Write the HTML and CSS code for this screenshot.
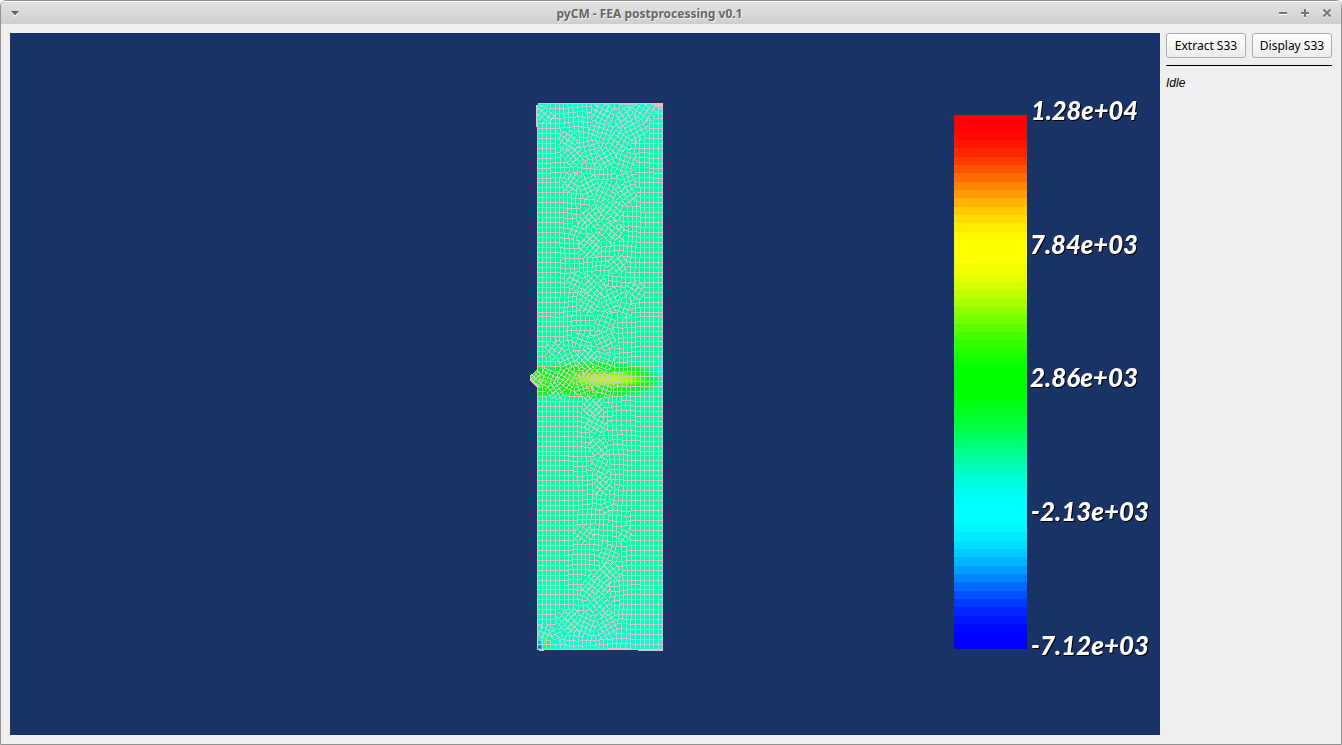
FILE: index.html
```html
<!DOCTYPE html>
<html lang="en">
<head>
<meta charset="utf-8">
<title>pyCM - FEA postprocessing v0.1</title>
<link rel="stylesheet" href="styles.css">
</head>
<body>
<div class="window">
  <header class="titlebar">
    <svg class="menu-arrow" width="10" height="7" viewBox="0 0 10 7"><path d="M1 2h8L5 7z" fill="#fff"/><path d="M1 1h8L5 5.5z" fill="#626262"/></svg>
    <h1 class="title">pyCM - FEA postprocessing v0.1</h1>
    <div class="controls">
      <svg width="10" height="10" viewBox="0 0 10 10"><path d="M1 6.5h8" stroke="#fff" stroke-width="1"/><path d="M1 5h8" stroke="#757575" stroke-width="2"/></svg>
      <svg width="10" height="10" viewBox="0 0 10 10"><path d="M1 6h8M5 2v8" stroke="#f4f4f4" stroke-width="2"/><path d="M1 5h8M5 1v8" stroke="#757575" stroke-width="2"/></svg>
      <svg width="10" height="10" viewBox="0 0 10 10"><path d="M1.5 2.5l7 7M8.500 2.500l-7 7" stroke="#f4f4f4" stroke-width="2"/><path d="M1.500 1.500l7 7M8.500 1.500l-7 7" stroke="#757575" stroke-width="2"/></svg>
    </div>
  </header>
  <main class="content">
    <svg class="viewport" viewBox="10 33 1150 702">
      <defs>
        <linearGradient id="stress" gradientUnits="userSpaceOnUse" x1="0" y1="103" x2="0" y2="650">
          <stop offset="0" stop-color="#00ffd0"/>
          <stop offset=".07" stop-color="#00ffb9"/>
          <stop offset=".2" stop-color="#00ffa5"/>
          <stop offset=".8" stop-color="#00ffa2"/>
          <stop offset=".94" stop-color="#00ffb9"/>
          <stop offset="1" stop-color="#00ffdc"/>
        </linearGradient>
        <radialGradient id="weld">
          <stop offset="0" stop-color="#2cff00"/>
          <stop offset=".65" stop-color="#06fa08"/>
          <stop offset=".82" stop-color="#00ff35" stop-opacity=".85"/>
          <stop offset="1" stop-color="#00ffa0" stop-opacity="0"/>
        </radialGradient>
        <radialGradient id="core">
          <stop offset="0" stop-color="#d4ff00"/>
          <stop offset=".5" stop-color="#9cff00" stop-opacity=".85"/>
          <stop offset="1" stop-color="#30ff00" stop-opacity="0"/>
        </radialGradient>
        <radialGradient id="cool">
          <stop offset="0" stop-color="#00ffe6"/>
          <stop offset="1" stop-color="#00ffb0" stop-opacity="0"/>
        </radialGradient>
        <clipPath id="part"><path id="outline" d="M539 103.500H662.500V650.500H638.500V649.500H543.500V650.500H539.500V649.500H537.500V387L530.500 380V376L537.500 370V126.500H536.500V105.500H538.500Z"/></clipPath>
      </defs>
      <g clip-path="url(#part)">
        <rect x="528" y="102" width="136" height="550" fill="url(#stress)"/>
        <ellipse cx="662" cy="372" rx="16" ry="32" fill="url(#cool)"/>
        <ellipse cx="545" cy="145" rx="12" ry="14" fill="url(#cool)" opacity=".6"/>
        <ellipse cx="594" cy="380" rx="73" ry="21" fill="url(#weld)"/>
        <ellipse cx="540" cy="381" rx="22" ry="18" fill="url(#weld)"/>
        <ellipse cx="625" cy="379" rx="34" ry="16" fill="url(#weld)"/>
        <ellipse cx="607" cy="379" rx="48" ry="10" fill="url(#core)"/>
        <ellipse cx="547" cy="643" rx="4" ry="7" fill="#19ff52" opacity=".8"/>
        <path d="M537 641h4v4h2v5h-6z" fill="#0aaeff"/>
        <path d="M538 646h3v2h-3z" fill="#0068ff"/>
        <path id="mesh" class="mesh" d=""/>
        <path d="M651 103h12v4h-9v-2h-3z" fill="#d0c9c9"/>
      </g>
      <use href="#outline" class="mesh"/>
      <g id="colorbar" shape-rendering="crispEdges"></g>
      <g class="scale">
        <text x="1031" y="120" textLength="107" lengthAdjust="spacingAndGlyphs">1.28e+04</text>
        <text x="1030" y="254" textLength="108" lengthAdjust="spacingAndGlyphs">7.84e+03</text>
        <text x="1030" y="387" textLength="108" lengthAdjust="spacingAndGlyphs">2.86e+03</text>
        <text x="1031" y="521" textLength="118" lengthAdjust="spacingAndGlyphs">-2.13e+03</text>
        <text x="1031" y="655" textLength="118" lengthAdjust="spacingAndGlyphs">-7.12e+03</text>
      </g>
    </svg>
    <aside class="panel">
      <div class="buttons">
        <button class="button">Extract S33</button>
        <button class="button">Display S33</button>
      </div>
      <div class="rule"></div>
      <div class="status">Idle</div>
    </aside>
  </main>
</div>
<script src="main.js"></script>
</body>
</html>
```
FILE: styles.css
```css
* { box-sizing: border-box; }
body { margin: 0; background: #fff; font-family: "Noto Sans", sans-serif; }
.window {
  display: flex; flex-direction: column;
  width: 1342px; height: 745px; overflow: hidden;
  border: 1px solid #929292; border-radius: 6px 6px 0 0;
  background: #efefef;
}
.titlebar {
  display: grid; grid-template-columns: 60px 1fr 60px; align-items: center;
  height: 23px; flex: none; padding: 0 8px 0 9px;
  border-top: 1px solid #fff;
  background: linear-gradient(#e3e3e3, #cecece);
}
.menu-arrow { margin-top: 1px; }
.title {
  margin: 0; text-align: center; padding: 2px 44px 0 0;
  font-size: 12px; line-height: 20px; font-weight: 700; color: #696565;
  text-shadow: 1px 1px 0 #f2f2f2;
}
.controls { display: flex; gap: 12px; justify-content: flex-end; padding-right: 1px; }
.controls svg { flex: none; }
.content { display: flex; flex: 1; gap: 6px; padding: 9px 9px 9px; }
.viewport { display: block; flex: none; width: 1150px; height: 702px; background: #1a3366; }
.mesh { fill: none; stroke: #d0c9c9; stroke-width: 1; shape-rendering: crispEdges; }
.scale {
  font: italic 900 26px Lato, sans-serif; fill: #fff;
  filter: drop-shadow(1px 1px 0 #000);
}
.panel { width: 166px; flex: none; }
.buttons { display: flex; gap: 6px; }
.button {
  width: 80px; height: 25px; padding: 0; white-space: nowrap;
  font: 12px/22px "Noto Sans", sans-serif; color: #000;
  border: 1px solid #acacac; border-radius: 3px;
  background: linear-gradient(#fff, #ececec);
}
.rule { height: 1px; margin-top: 7px; background: #000; }
.status { margin-top: 10px; font: italic 12px/14px "Liberation Sans", sans-serif; color: #000; }
```
FILE: main.js
```javascript
// Colour scale: 64 hues from blue to red, each channel eased by an S-curve.
const NS = "http://www.w3.org/2000/svg";
const bar = document.getElementById("colorbar");
const ease = v => Math.round(127.5 * (1 - Math.cos(v * Math.PI)));
function channel(h, n) {
  const k = (n + h * 6) % 6;
  return 1 - Math.max(0, Math.min(k, 4 - k, 1));
}
for (let i = 0; i < 64; i++) {
  const h = 2 / 3 * i / 63;
  const rect = document.createElementNS(NS, "rect");
  const top = Math.round(115 + i * 534 / 64);
  rect.setAttribute("x", 954);
  rect.setAttribute("y", top);
  rect.setAttribute("width", 73);
  rect.setAttribute("height", Math.round(115 + (i + 1) * 534 / 64) - top);
  rect.setAttribute("fill", `rgb(${[5, 3, 1].map(n => ease(channel(h, n))).join()})`);
  bar.appendChild(rect);
}

// Finite element mesh: a regular grid with rotated patches through the middle.
// Each patch is [centre x, centre y, radius, angle in degrees, cell size].
const patches = [
  [545,114,9,40,4.3],[568,140,11,35,4.3],[574,156,12,48,4.2],[604,115,13,28,4.5],
  [625,119,13,55,4.6],[643,109,13,33,4.5],[602,133,14,18,4.3],[618,143,15,33,4.5],
  [635,128,13,62,4.5],[606,157,13,60,4.4],[624,161,13,20,4.5],[590,150,12,75,4.6],
  [571,182,10,35,4.3],[589,187,12,65,4.5],[606,194,14,25,4.5],[624,194,13,55,4.5],
  [610,209,14,38,4.5],[592,217,13,50,4.3],[628,177,10,70,4.5],[576,231,8,22,4.3],
  [612,231,12,40,4.5],[590,245,13,42,4.2],[617,265,10,50,4.4],[577,281,10,28,4.5],
  [594,287,14,46,4.1],[590,301,13,33,4.3],[610,299,12,65,4.4],[635,291,10,35,4.6],
  [624,308,9,18,4.6],[605,322,11,20,4.6],[605,341,12,65,4.5],[582,340,9,20,4.6],
  [555,350,10,38,4.5],[588,360,12,45,4.2],[603,363,11,20,4.3],[568,359,10,65,4.4],
  [536,379,9,45,3.2],[548,378,10,25,3.7],[556,391,10,55,3.9],[568,379,12,33,3.9],
  [582,385,11,70,4],[597,376,13,43,3.5],[603,389,9,20,4.2],
  [593,407,12,45,4.2],[596,424,11,30,4.2],[599,447,11,50,4.3],
  [600,467,11,25,4.4],[603,486,10,40,4.3],[607,507,8,65,4.6],
  [584,534,9,35,4.3],[625,536,8,30,4.6],[609,555,11,20,4.5],[610,572,11,48,4.3],
  [595,588,15,38,4.2],[600,606,14,50,4.4],[568,621,13,43,4.3],[588,624,13,23,4.4],
  [605,626,13,60,4.4],[544,633,9,25,4.3],[556,634,8,60,4.4]
];
function owner(x, y) {
  let best = -1, closest = 1;
  patches.forEach(([px, py, r], i) => {
    const d = ((x - px) ** 2 + (y - py) ** 2) / (r * r);
    if (d < closest) { closest = d; best = i; }
  });
  return best;
}
const noise = (x, y, s) => {
  const v = Math.sin(x * 12.9898 + y * 78.233 + s * 37.719) * 43758.5453;
  return v - Math.floor(v) - 0.5;
};
const path = [];
function addGrid(id, node, c0, c1, r0, r1) {
  const edge = (a, b) => {
    if (owner((a[0] + b[0]) / 2, (a[1] + b[1]) / 2) === id)
      path.push(`M${a[0].toFixed(1)} ${a[1].toFixed(1)}L${b[0].toFixed(1)} ${b[1].toFixed(1)}`);
  };
  for (let r = r0; r <= r1; r++)
    for (let c = c0; c <= c1; c++) {
      const a = node(c, r);
      edge(a, node(c + 1, r));
      edge(a, node(c, r + 1));
    }
}
addGrid(-1, (c, r) => {
  const x = 537.5 + c * 125 / 28, y = 103.5 + r * 546 / 110;
  const left = y > 400 && y < 610 ? 570 : 552;
  const right = y > 310 ? 638 : 650;
  const inner = Math.max(0, Math.min(1, (x - left) / 20, (right - x) / 20));
  return [
    x + inner * (1.5 * Math.sin(y / 19 + x / 30) + noise(c, r, 1) * .7),
    y + inner * (1.5 * Math.sin(x / 15 + y / 33) + noise(c, r, 2) * .7)
  ];
}, 0, 28, 0, 110);
patches.forEach(([px, py, radius, angle, size], i) => {
  const a = angle * Math.PI / 180, n = Math.ceil(radius / size) + 2;
  addGrid(i, (c, r) => {
    const u = c * size + noise(c, r, i) * .9, v = r * size * 1.08 + noise(c, r, i + 9) * .9;
    return [px + u * Math.cos(a) - v * Math.sin(a), py + u * Math.sin(a) + v * Math.cos(a)];
  }, -n, n, -n, n);
});
document.getElementById("mesh").setAttribute("d", path.join(""));
```
